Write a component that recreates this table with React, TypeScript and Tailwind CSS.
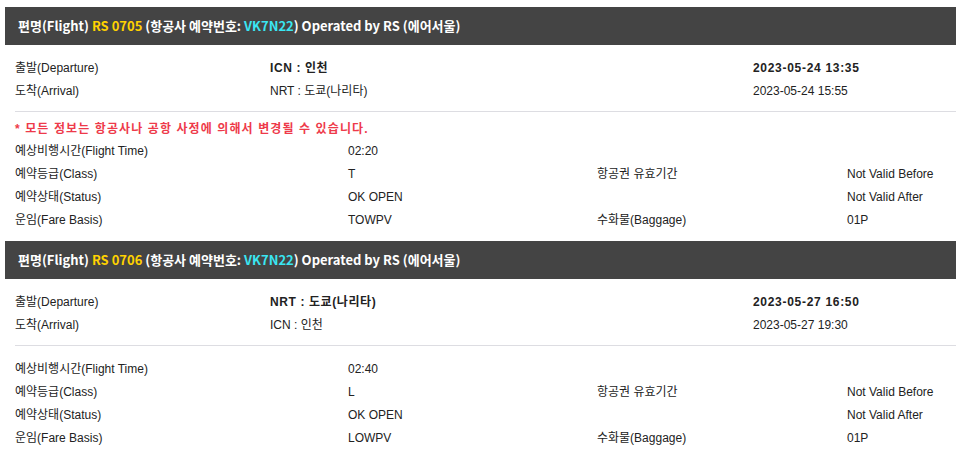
const flights = [
  {
    no: "RS 0705",
    dep: "ICN : 인천",
    arr: "NRT : 도쿄(나리타)",
    depTime: "2023-05-24 13:35",
    arrTime: "2023-05-24 15:55",
    warn: true,
    time: "02:20",
    cls: "T",
    fare: "TOWPV",
  },
  {
    no: "RS 0706",
    dep: "NRT : 도쿄(나리타)",
    arr: "ICN : 인천",
    depTime: "2023-05-27 16:50",
    arrTime: "2023-05-27 19:30",
    warn: false,
    time: "02:40",
    cls: "L",
    fare: "LOWPV",
  },
];

type Flight = (typeof flights)[number];

const Section = ({ f }: { f: Flight }) => {
  return (
    <div className="mb-[10px]">
      <div className="h-[38px] bg-[#444444] flex items-center pl-[13px] text-[13px] font-bold text-white font-['Noto_Sans_CJK_KR',sans-serif]">
        <span>
          편명(Flight) <span className="text-[#ffd200]">{f.no}</span> (항공사 예약번호:{" "}
          <span className="text-[#3ae6f2]">VK7N22</span>) Operated by RS (에어서울)
        </span>
      </div>
      <div className="pl-[10px]">
        <div className="pt-[11px]">
          <div className="grid grid-cols-[255px_483px_1fr] h-[23px] items-center">
            <span>출발(Departure)</span>
            <span className="font-bold tracking-[0.6px]">{f.dep}</span>
            <span className="font-bold tracking-[0.7px]">{f.depTime}</span>
          </div>
          <div className="grid grid-cols-[255px_483px_1fr] h-[23px] items-center">
            <span>도착(Arrival)</span>
            <span>{f.arr}</span>
            <span>{f.arrTime}</span>
          </div>
        </div>
        <div className="mt-[9px] h-px bg-[#dddde2]" />
        <div className={f.warn ? "pt-[6px]" : "pt-[11px]"}>
          {f.warn && (
            <div className="h-[21px] flex items-center font-bold text-[#ee3a4a] tracking-[1.1px]">
              * 모든 정보는 항공사나 공항 사정에 의해서 변경될 수 있습니다.
            </div>
          )}
          <div className="grid grid-cols-[333px_249px_250px_1fr] h-[23px] items-center">
            <span>예상비행시간(Flight Time)</span>
            <span>{f.time}</span>
            <span />
            <span />
          </div>
          <div className="grid grid-cols-[333px_249px_250px_1fr] h-[23px] items-center">
            <span>예약등급(Class)</span>
            <span>{f.cls}</span>
            <span>항공권 유효기간</span>
            <span>Not Valid Before</span>
          </div>
          <div className="grid grid-cols-[333px_249px_250px_1fr] h-[23px] items-center">
            <span>예약상태(Status)</span>
            <span>OK OPEN</span>
            <span />
            <span>Not Valid After</span>
          </div>
          <div className="grid grid-cols-[333px_249px_250px_1fr] h-[23px] items-center">
            <span>운임(Fare Basis)</span>
            <span>{f.fare}</span>
            <span>수화물(Baggage)</span>
            <span>01P</span>
          </div>
        </div>
      </div>
    </div>
  );
};

export default function App() {
  return (
    <div className="w-[956px] h-[468px] bg-white pt-[7px] pl-[5px] text-[12px] text-[#222222] font-['Liberation_Sans','Noto_Sans_CJK_KR',sans-serif] overflow-hidden">
      {flights.map((f) => (
        <Section key={f.no} f={f} />
      ))}
    </div>
  );
}
